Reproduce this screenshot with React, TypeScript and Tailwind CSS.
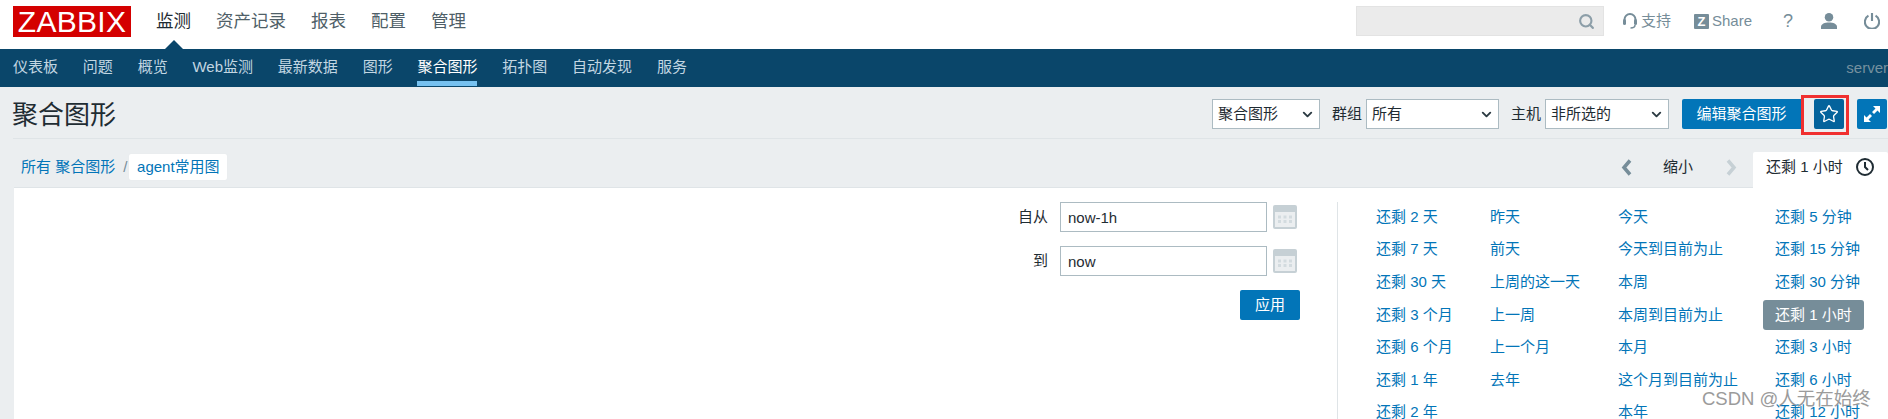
import React from "react";
import { ChevronDown, Search, Star } from "lucide-react";

const mainMenu = ["监测", "资产记录", "报表", "配置", "管理"];
const subMenu = ["仪表板", "问题", "概览", "Web监测", "最新数据", "图形", "聚合图形", "拓扑图", "自动发现", "服务"];

const ranges = [
  ["还剩 2 天", "还剩 7 天", "还剩 30 天", "还剩 3 个月", "还剩 6 个月", "还剩 1 年", "还剩 2 年"],
  ["昨天", "前天", "上周的这一天", "上一周", "上一个月", "去年", ""],
  ["今天", "今天到目前为止", "本周", "本周到目前为止", "本月", "这个月到目前为止", "本年"],
  ["还剩 5 分钟", "还剩 15 分钟", "还剩 30 分钟", "还剩 1 小时", "还剩 3 小时", "还剩 6 小时", "还剩 12 小时"],
];

const columnClasses = ["w-[114px]", "w-[128px]", "w-[157px]", "w-[110px]"];

const SelectBox = ({ value, width }: { value: string; width: string }) => (
  <div className={`flex h-[30px] items-center justify-between border border-[#acbbc2] bg-white pl-[5px] pr-[4px] text-[15px] text-[#1f2c33] ${width}`}>
    <span>{value}</span>
    <ChevronDown size={15} strokeWidth={3} className="text-[#2b3a42]" />
  </div>
);

const CalendarIcon = () => (
  <svg width="24" height="24" viewBox="0 0 24 24" className="ml-[6px]">
    <rect x="0" y="0" width="24" height="24" rx="2" fill="#c6d0d5" />
    <rect x="2" y="7" width="20" height="15" fill="#ebeef0" />
    {[5, 10.500, 16].map((x) =>
      [10.500, 15].map((y) => <rect key={`${x}-${y}`} x={x} y={y} width="3" height="3" fill="#d3dbdf" />)
    )}
  </svg>
);

const TimeInput = ({ label, value }: { label: string; value: string }) => (
  <div className="mr-[3px] flex items-center">
    <span className="w-[34px] text-right text-[15px] text-[#1f2c33]">{label}</span>
    <input
      readOnly
      value={value}
      className="ml-[12px] h-[30px] w-[207px] border border-[#acbbc2] bg-white px-[7px] text-[15px] text-[#1f2c33] outline-none"
    />
    <CalendarIcon />
  </div>
);

const Chevron = ({ points, color }: { points: string; color: string }) => (
  <svg width="11" height="17" viewBox="0 0 11 17" fill="none" stroke={color} strokeWidth="3.500">
    <polyline points={points} />
  </svg>
);

const App = () => {
  return (
    <div
      className="relative h-[419px] w-[1888px] overflow-hidden bg-[#ebeef0]"
      style={{ fontFamily: '"Liberation Sans", "Noto Sans CJK SC", sans-serif' }}
    >
      {/* top header */}
      <header className="relative flex h-[49px] items-start bg-white">
        <div className="ml-[13px] mt-[6px] flex h-[31px] w-[118px] items-center justify-center bg-[#d40000] text-[30px] leading-none tracking-[0.3px] text-white">
          ZABBIX
        </div>
        <nav className="ml-[25px] mt-[9px] flex gap-[25px] text-[17.5px] leading-[24px] text-[#4f5f68]">
          {mainMenu.map((item, i) => (
            <span key={item} className={i === 0 ? "text-[#1f2c33]" : ""}>
              {item}
            </span>
          ))}
        </nav>
        <div className="absolute bottom-0 left-[165px] h-0 w-0 border-x-[9px] border-b-[9px] border-x-transparent border-b-[#0a466a]" />
        <div className="ml-auto mt-[6px] flex items-start text-[15px] text-[#768d99]">
          <div className="flex h-[30px] w-[248px] items-center justify-end border border-[#e3e3e3] bg-[#ebebeb] pr-[8px]">
            <Search size={17} strokeWidth={3} className="text-[#8c9ea8]" />
          </div>
          <div className="ml-[19px] mt-[4px] flex h-[22px] items-center">
            <svg width="14" height="16" viewBox="0 0 14 16" fill="none" stroke="#768d99" strokeWidth="2">
              <path d="M1.500 9V6.500a5.500 5.500 0 0 1 11 0V9" />
              <rect x="0" y="6" width="3" height="6" rx="1.500" fill="#768d99" stroke="none" />
              <rect x="11" y="6" width="3" height="6" rx="1.500" fill="#768d99" stroke="none" />
              <path d="M12 12c0 2-2 3-4.500 3" strokeWidth="1.500" />
            </svg>
            <span className="ml-[4px]">支持</span>
          </div>
          <div className="ml-[23px] mt-[4px] flex h-[22px] items-center">
            <span className="flex h-[15px] w-[15px] items-center justify-center rounded-[1px] bg-[#768d99] text-[13px] font-bold leading-none text-white">Z</span>
            <span className="ml-[3px] text-[15px]">Share</span>
          </div>
          <span className="ml-[31px] mt-[4px] text-[18px] leading-[22px]">?</span>
          <svg className="ml-[28px] mt-[7px]" width="16" height="16" viewBox="0 0 17 17" fill="#768d99">
            <circle cx="8.500" cy="4.500" r="4.500" />
            <path d="M0 17v-2.500c0-3 4-4.500 8.500-4.500s8.500 1.500 8.500 4.500v2.500z" />
          </svg>
          <svg className="ml-[27px] mr-[8px] mt-[7px]" width="16" height="16" viewBox="0 0 18 18" fill="none" stroke="#768d99" strokeWidth="2.400">
            <path d="M9 0v9" />
            <path d="M5 3a8 8 0 1 0 8 0" />
          </svg>
        </div>
      </header>

      {/* sub menu */}
      <nav className="flex h-[38px] items-start justify-between bg-[#0a466a] pl-[13px]">
        <div className="flex gap-[24.8px] text-[15px] text-[#c2d6e2]">
          {subMenu.map((item) => (
            <span
              key={item}
              className={
                item === "聚合图形"
                  ? "flex h-[37px] items-center border-b-[5px] border-[#76c1f0] pt-[5px] text-white"
                  : "flex h-[37px] items-center"
              }
            >
              {item}
            </span>
          ))}
        </div>
        <span className="mt-[8px] text-[15px] text-[#76919f]">server</span>
      </nav>

      {/* title row */}
      <div className="ml-[13px] flex h-[52px] items-center justify-between border-b border-[#dfe4e7] pt-[3px]">
        <h1 className="-ml-px mt-[2px] text-[26px] font-normal text-[#1f2c33]">聚合图形</h1>
        <div className="flex items-center text-[15px] text-[#1f2c33]">
          <SelectBox value="聚合图形" width="w-[108px]" />
          <span className="ml-[12px] mr-[4px]">群组</span>
          <SelectBox value="所有" width="w-[133px]" />
          <span className="ml-[12px] mr-[4px]">主机</span>
          <SelectBox value="非所选的" width="w-[124px]" />
          <button className="ml-[13px] h-[30px] w-[119px] rounded-l-[2px] bg-[#0275b8] text-[15px] text-white">编辑聚合图形</button>
          <button className="ml-[13px] flex h-[30px] w-[30px] items-center justify-center rounded-[2px] bg-[#04639c] text-white">
            <Star size={20} strokeWidth={1.6} />
          </button>
          <button className="ml-[13px] mr-[1px] flex h-[30px] w-[30px] items-center justify-center rounded-[2px] bg-[#0275b8]">
            <svg width="20" height="20" viewBox="0 0 20 20" fill="white">
              <path d="M11 2h7v7l-2.500-2.500-3.500 3.500-2-2 3.500-3.500z" />
              <path d="M9 18H2v-7l2.500 2.500 3.500-3.500 2 2-3.500 3.500z" />
            </svg>
          </button>
        </div>
      </div>

      {/* breadcrumb + zoom bar */}
      <div className="flex h-[49px] items-end justify-between pl-[13px]">
        <div className="mb-[8px] flex items-center text-[15px]">
          <span className="ml-[8px] text-[#0275b8]">所有 聚合图形</span>
          <span className="ml-[8px] mr-[2px] text-[#768d99]">/</span>
          <span className="flex h-[26px] w-[98px] items-center justify-center rounded-[2px] bg-white text-[#0275b8] shadow-[0_0_1px_#dfe4e7]">agent常用图</span>
        </div>
        <div className="flex items-end text-[15px] text-[#1f2c33]">
          <div className="mb-[10px] flex h-[22px] items-center">
            <Chevron points="9,1.500 3,8.500 9,15.500" color="#768d99" />
            <span className="ml-[31px]">缩小</span>
            <div className="ml-[33px] mr-[16px]">
              <Chevron points="2,1.500 8,8.500 2,15.500" color="#c6d0d5" />
            </div>
          </div>
          <div className="relative flex h-[36px] w-[135px] items-center rounded-t-[2px] bg-white pb-[6px] pl-[13px]">
            <span>还剩 1 小时</span>
            <svg className="ml-[13px]" width="18" height="18" viewBox="0 0 18 18" fill="none" stroke="#1f2c33" strokeWidth="2">
              <circle cx="9" cy="9" r="8" />
              <path d="M9 4v5l3 3" />
            </svg>
          </div>
        </div>
      </div>

      {/* filter panel */}
      <section className="ml-[14px] flex h-[231px] bg-white pt-[14px] shadow-[0_-1px_0_#dfe4e7]">
        <div className="flex w-[1324px] justify-end border-r border-[#dfe4e7] pr-[37px]">
          <div className="flex flex-col items-end gap-[14px]">
            <TimeInput label="自从" value="now-1h" />
            <TimeInput label="到" value="now" />
            <button className="h-[30px] w-[60px] rounded-[2px] bg-[#0275b8] text-[15px] text-white">应用</button>
          </div>
        </div>
        <div className="ml-[38px] flex text-[15px] text-[#0275b8]">
          {ranges.map((column, c) => (
            <div key={c} className={`flex flex-col ${columnClasses[c]}`}>
              {column.map((item, r) => (
                <span
                  key={r}
                  className={
                    item === "还剩 1 小时"
                      ? "mb-[2.600px] -ml-[12px] flex h-[30px] w-[101px] shrink-0 items-center rounded-[3px] bg-[#768d99] pl-[12px] text-white"
                      : "mb-[2.600px] flex h-[30px] shrink-0 items-center whitespace-nowrap"
                  }
                >
                  {item}
                </span>
              ))}
            </div>
          ))}
        </div>
      </section>

      {/* annotation and watermark on top of the screenshot */}
      <div className="absolute left-[1801px] top-[95px] h-[40px] w-[48px] border-[3px] border-[#f03030]" />
      <span className="absolute left-[1702px] top-[385px] text-[18.500px] text-[#8a8a8a] opacity-85">CSDN @人无在始终</span>
    </div>
  );
};

export default App;
